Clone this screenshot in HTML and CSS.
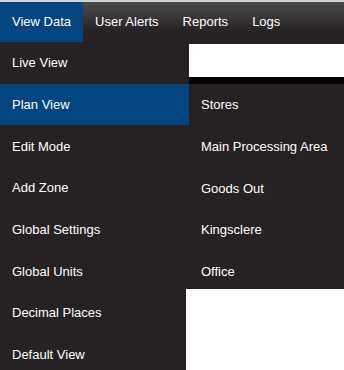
FILE: index.html
```html
<!DOCTYPE html>
<html>
<head>
    <title>View Data</title>
    <link rel="stylesheet" href="styles.css">
</head>
<body>
    <div class="topbar">
        <a class="tab active">View Data</a>
        <a class="tab">User Alerts</a>
        <a class="tab">Reports</a>
        <a class="tab">Logs</a>
    </div>

    <div class="page">
        <ul class="menu">
            <li>Live View</li>
            <li class="active">Plan View</li>
            <li>Edit Mode</li>
            <li>Add Zone</li>
            <li>Global Settings</li>
            <li>Global Units</li>
            <li>Decimal Places</li>
            <li>Default View</li>
        </ul>

        <div class="side">
            <div class="banner"></div>
            <div class="banner-bar"></div>
            <ul class="submenu">
                <li>Stores</li>
                <li>Main Processing Area</li>
                <li>Goods Out</li>
                <li>Kingsclere</li>
                <li>Office</li>
            </ul>
        </div>
    </div>
</body>
</html>
```

FILE: styles.css
```css
body {
    margin: 0;
    background: #fff;
    font-family: "Liberation Sans", Arial, sans-serif;
    font-size: 13px;
    color: #fff;
}

.topbar {
    display: flex;
    height: 40px;
    border-top: 2px solid #d2d2d2;
    background: linear-gradient(#4b4b4b, #262223 75%);
}
.tab {
    display: flex;
    align-items: center;
    padding: 0 12px 1px 12px;
    cursor: pointer;
}
.tab.active { background: #04447f; }

.page {
    display: flex;
    height: 328px;
}

ul { list-style: none; margin: 0; padding: 0; }

.menu {
    width: 186px;
    background: #262223;
}
.menu li,
.submenu li {
    display: flex;
    align-items: center;
    height: 41.7px;
    padding: 0 12px;
    white-space: nowrap;
}
.menu li.active {
    background: #04447f;
    margin-right: -3px;
    position: relative;
}

.side {
    flex: 1;
    display: flex;
    flex-direction: column;
}
.banner {
    height: 33px;
    background: #fff;
    border-top: 2px solid #262223;
    border-left: 3px solid #262223;
}
.banner-bar {
    height: 7px;
    background: #000;
    border-left: 3px solid #262223;
}
.submenu {
    height: 205px;
    overflow: hidden;
    background: #262223;
}
.submenu li { padding-left: 15px; }
```
